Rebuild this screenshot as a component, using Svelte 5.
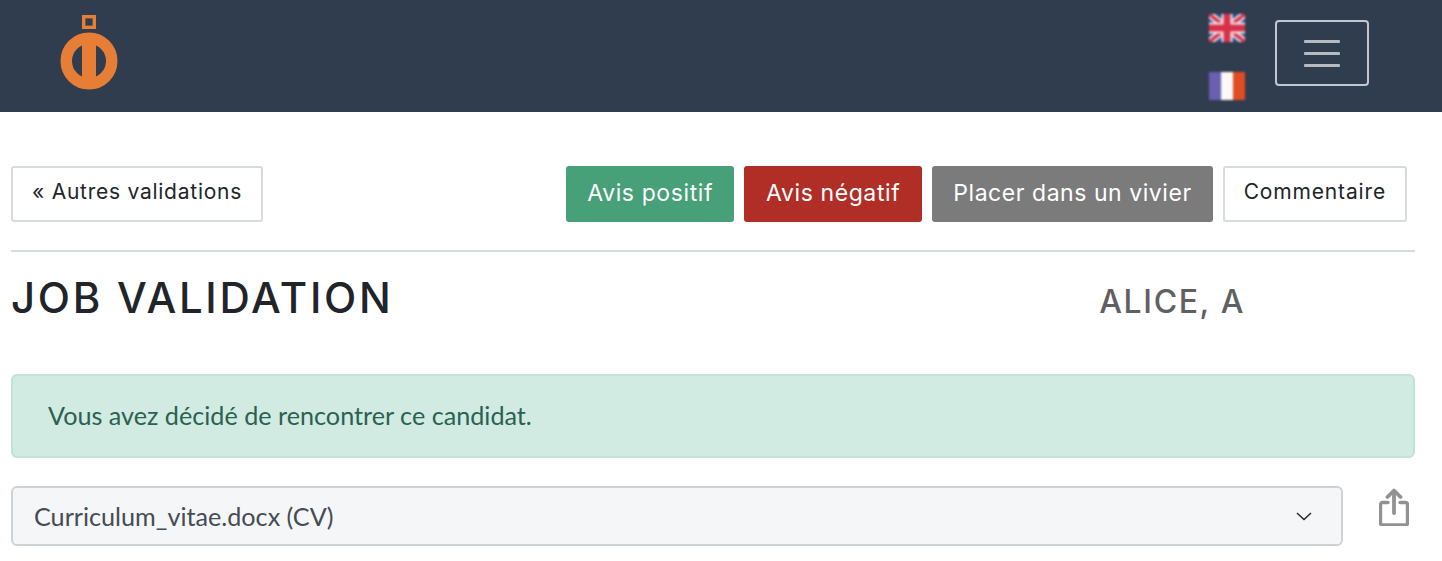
<script lang="ts">
    let doc = $state('cv');
</script>

<header class="topbar">
    <a class="logo" href="#home" aria-label="Accueil">
        <svg width="60" height="78" viewBox="0 0 60 78">
            <rect x="24.700" y="2.700" width="10.600" height="10.600" fill="none" stroke="#e67e36" stroke-width="3.4" />
            <circle cx="30" cy="47" r="22.750" fill="none" stroke="#e67e36" stroke-width="11.500" />
            <rect x="23" y="24" width="14" height="46" fill="#e67e36" />
        </svg>
    </a>
    <div class="right">
        <div class="flags">
            <svg class="flag" width="36" height="28" viewBox="0 0 36 28">
                <rect width="36" height="28" fill="#2c4a8c" />
                <path d="M0 0 36 28M36 0 0 28" stroke="#f5eef0" stroke-width="7" />
                <path d="M0 0 36 28M36 0 0 28" stroke="#d8304a" stroke-width="3.500" />
                <path d="M18 0V28M0 14H36" stroke="#f5eef0" stroke-width="11" />
                <path d="M18 0V28M0 14H36" stroke="#d8304a" stroke-width="7" />
            </svg>
            <svg class="flag" width="36" height="28" viewBox="0 0 36 28">
                <rect width="12" height="28" fill="#6a5fb0" />
                <rect x="12" width="12" height="28" fill="#f9f9f9" />
                <rect x="24" width="12" height="28" fill="#e04c24" />
            </svg>
        </div>
        <button class="burger" aria-label="Menu"><span></span><span></span><span></span></button>
    </div>
</header>

<main class="page">
    <div class="toolbar">
        <button class="btn outline back">« Autres validations</button>
        <div class="actions">
            <button class="btn green">Avis positif</button>
            <button class="btn red">Avis négatif</button>
            <button class="btn grey">Placer dans un vivier</button>
            <button class="btn outline">Commentaire</button>
        </div>
    </div>
    <hr />
    <div class="heading">
        <h1>JOB VALIDATION</h1>
        <h2>ALICE, A</h2>
    </div>
    <div class="alert">Vous avez décidé de rencontrer ce candidat.</div>
    <div class="docrow">
        <div class="selectwrap">
            <select bind:value={doc}>
                <option value="cv">Curriculum_vitae.docx (CV)</option>
            </select>
            <svg class="chev" width="16" height="16" viewBox="0 0 16 16">
                <path d="M1 5l7 6.500L15 5" fill="none" stroke="#212529" stroke-width="1.4" />
            </svg>
        </div>
        <svg class="share" width="30" height="38" viewBox="0 0 30 38">
            <path d="M9 14.500H3.500a2 2 0 0 0-2 2V35a2 2 0 0 0 2 2h23a2 2 0 0 0 2-2V16.500a2 2 0 0 0-2-2H21" fill="none" stroke="#929292" stroke-width="3.400" stroke-linecap="round" />
            <path d="M15 25V3M8.500 9 15 2.500 21.500 9" fill="none" stroke="#929292" stroke-width="3.800" stroke-linecap="round" stroke-linejoin="round" />
        </svg>
    </div>
</main>

<style>
    :global(body) {
        background: #fff;
        font-family: Lato, sans-serif;
        color: #212529;
    }
    .topbar {
        height: 112px;
        background: #303d4f;
        display: flex;
        justify-content: space-between;
        align-items: flex-start;
        padding: 0 73px 0 59px;
        box-sizing: border-box;
    }
    .logo {
        display: block;
        padding-top: 14px;
    }
    .logo svg {
        display: block;
    }
    .right {
        display: flex;
        align-items: flex-start;
        gap: 30px;
    }
    .flags {
        display: flex;
        flex-direction: column;
        gap: 30px;
        padding-top: 14px;
    }
    .flag {
        display: block;
        filter: blur(0.8px);
    }
    .burger {
        width: 94px;
        height: 66px;
        margin-top: 20px;
        box-sizing: border-box;
        background: none;
        border: 2px solid #c3c7cc;
        border-radius: 4px;
        display: flex;
        flex-direction: column;
        align-items: center;
        justify-content: center;
        gap: 9px;
        padding: 0 1px 0 0;
    }
    .burger span {
        display: block;
        width: 36px;
        height: 3px;
        border-radius: 1px;
        background: #b6bbc1;
    }
    .page {
        padding: 54px 27px 0 11px;
    }
    .toolbar {
        display: flex;
        justify-content: space-between;
        padding-right: 8px;
    }
    .actions {
        display: flex;
        gap: 10px;
    }
    .btn {
        height: 56px;
        box-sizing: border-box;
        padding: 0 19px 3px;
        border-radius: 3px;
        border: 2px solid transparent;
        font-family: Inter, sans-serif;
        font-size: 23px;
        font-weight: 400;
        letter-spacing: 0.6px;
        color: #fff;
    }
    .outline {
        background: #fff;
        border-color: #d6dbdb;
        color: #212529;
        font-size: 21px;
        padding-bottom: 6px;
        letter-spacing: 0.85px;
    }
    .back {
        letter-spacing: 0.75px;
    }
    .green { background: #47a077; }
    .red {
        background: #b02e26;
        padding-left: 20px;
        padding-right: 20px;
    }
    .grey {
        background: #7b7b7b;
        letter-spacing: 0.55px;
    }
    hr {
        margin: 28px 0 0;
        border: 0;
        border-top: 2px solid #d6dbdb;
    }
    .heading {
        display: flex;
        align-items: baseline;
        justify-content: space-between;
        padding-right: 170px;
        height: 122px;
    }
    h1 {
        margin: 16px 0 0;
        font-family: Inter, sans-serif;
        font-size: 42px;
        font-weight: 500;
        letter-spacing: 2.7px;
        line-height: 60px;
        color: #212529;
    }
    h2 {
        margin: 0;
        font-family: Inter, sans-serif;
        font-size: 32px;
        font-weight: 500;
        letter-spacing: 1.6px;
        color: #5f6062;
    }
    .alert {
        height: 84px;
        box-sizing: border-box;
        display: flex;
        align-items: center;
        padding: 0 35px 3px;
        background: #d1ebe2;
        border: 2px solid #bfe3d7;
        border-radius: 6px;
        color: #2a6150;
        font-size: 25.2px;
    }
    .docrow {
        display: flex;
        align-items: flex-start;
        margin-top: 28px;
    }
    .selectwrap {
        position: relative;
        width: 1332px;
    }
    select {
        appearance: none;
        display: block;
        width: 100%;
        height: 60px;
        padding: 0 21px;
        box-sizing: border-box;
        background: #f5f6f8;
        border: 2px solid #ced1d6;
        border-radius: 6px;
        font-family: Lato, sans-serif;
        font-size: 25.2px;
        color: #454c53;
    }
    .chev {
        position: absolute;
        right: 31px;
        top: 22px;
    }
    .share {
        margin-left: 36px;
        margin-top: 2px;
    }
</style>
